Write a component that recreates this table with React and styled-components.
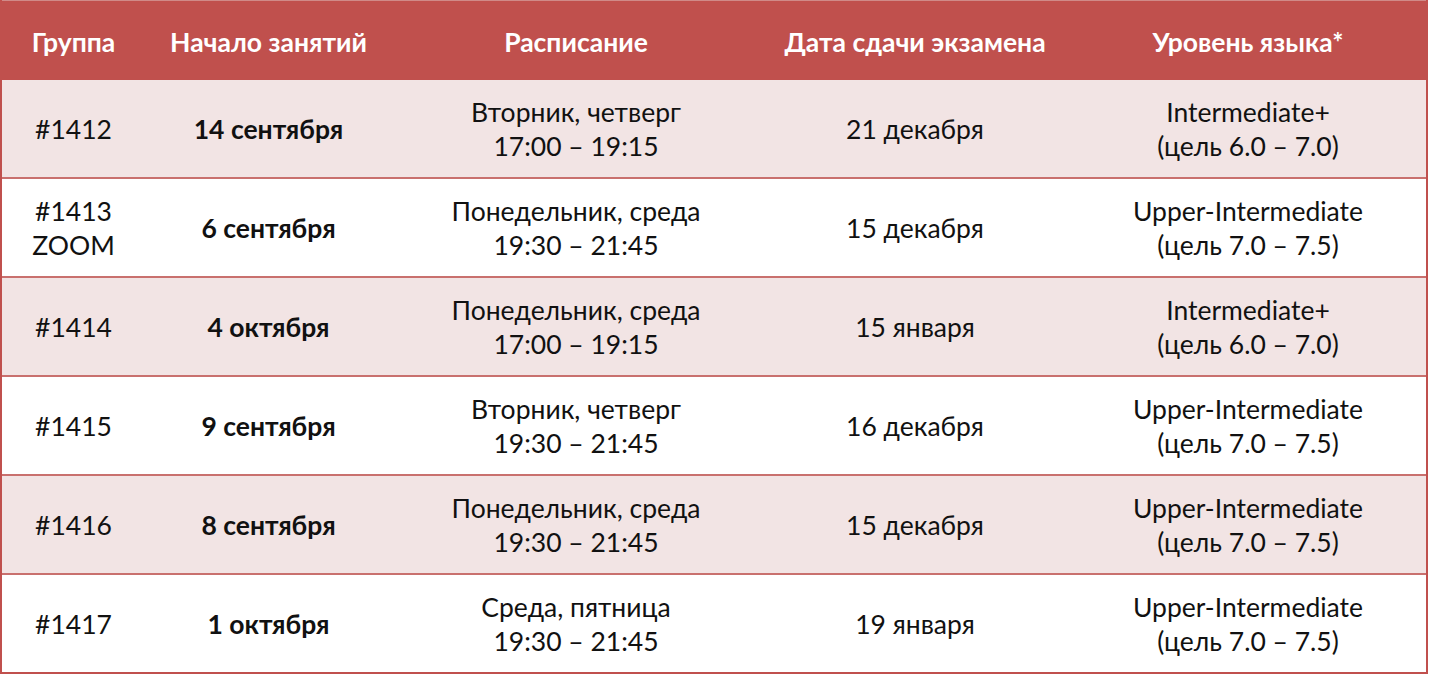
import React from "react";
import styled, {createGlobalStyle} from "styled-components";

const GlobalStyle = createGlobalStyle`
  body {
    margin: 0;
    background: #ffffff;
    font-family: Lato, "Open Sans", sans-serif;
  }
`;

const groups = [
    {id: "#1412", start: "14 сентября", days: "Вторник, четверг", time: "17:00 – 19:15", exam: "21 декабря", level: "Intermediate+", goal: "(цель 6.0 – 7.0)"},
    {id: "#1413", extra: "ZOOM", start: "6 сентября", days: "Понедельник, среда", time: "19:30 – 21:45", exam: "15 декабря", level: "Upper-Intermediate", goal: "(цель 7.0 – 7.5)"},
    {id: "#1414", start: "4 октября", days: "Понедельник, среда", time: "17:00 – 19:15", exam: "15 января", level: "Intermediate+", goal: "(цель 6.0 – 7.0)"},
    {id: "#1415", start: "9 сентября", days: "Вторник, четверг", time: "19:30 – 21:45", exam: "16 декабря", level: "Upper-Intermediate", goal: "(цель 7.0 – 7.5)"},
    {id: "#1416", start: "8 сентября", days: "Понедельник, среда", time: "19:30 – 21:45", exam: "15 декабря", level: "Upper-Intermediate", goal: "(цель 7.0 – 7.5)"},
    {id: "#1417", start: "1 октября", days: "Среда, пятница", time: "19:30 – 21:45", exam: "19 января", level: "Upper-Intermediate", goal: "(цель 7.0 – 7.5)"},
];

const Schedule = styled.div`
  width: 1428px;
  box-sizing: border-box;
  border-left: 2px solid #c0504d;
  border-right: 2px solid #c0504d;
  border-bottom: 2px solid #c0504d;
`;

const columns = "143px 247px 368px 310px 1fr";

const HeaderRow = styled.div`
  display: grid;
  grid-template-columns: ${columns};
  height: 80px;
  background: #c0504d;
  border-top: 1px solid #d08a88;
  box-sizing: border-box;
`;

const HeadCell = styled.div`
  display: flex;
  align-items: center;
  justify-content: center;
  color: #ffffff;
  font-weight: 700;
  font-size: 26.5px;
  padding-top: 2px;
`;

const Row = styled.div`
  display: grid;
  grid-template-columns: ${columns};
  height: 99px;
  box-sizing: border-box;
  background: ${p => (p.$striped ? "#f2e4e4" : "#ffffff")};
  border-bottom: 2px solid #c9706e;
  &:last-child {
    border-bottom: none;
    height: 97px;
  }
`;

const Cell = styled.div`
  display: flex;
  flex-direction: column;
  align-items: center;
  justify-content: center;
  text-align: center;
  color: #111111;
  font-size: 26.5px;
  line-height: 34px;
  font-weight: ${p => (p.$bold ? 700 : 400)};
`;

export default function App() {
    return (
        <>
            <GlobalStyle />
            <Schedule>
                <HeaderRow>
                    <HeadCell>Группа</HeadCell>
                    <HeadCell>Начало занятий</HeadCell>
                    <HeadCell>Расписание</HeadCell>
                    <HeadCell>Дата сдачи экзамена</HeadCell>
                    <HeadCell>Уровень языка*</HeadCell>
                </HeaderRow>
                {groups.map((g, idx) => (
                    <Row key={g.id} $striped={idx % 2 === 0}>
                        <Cell>
                            <span>{g.id}</span>
                            {g.extra && <span>{g.extra}</span>}
                        </Cell>
                        <Cell $bold>{g.start}</Cell>
                        <Cell>
                            <span>{g.days}</span>
                            <span>{g.time}</span>
                        </Cell>
                        <Cell>{g.exam}</Cell>
                        <Cell>
                            <span>{g.level}</span>
                            <span>{g.goal}</span>
                        </Cell>
                    </Row>
                ))}
            </Schedule>
        </>
    );
}
